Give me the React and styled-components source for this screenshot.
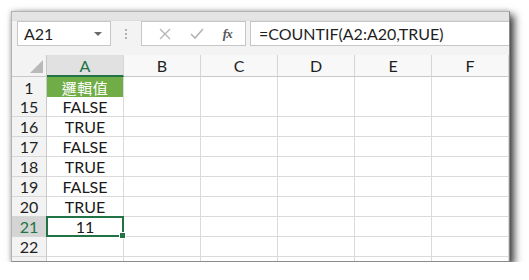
import React from "react";
import styled, { createGlobalStyle } from "styled-components";

const Global = createGlobalStyle`
  html, body { margin: 0; padding: 0; background: #ffffff; }
  body { font-family: Lato, "Liberation Sans", "Noto Sans CJK TC", sans-serif; }
`;

const Page = styled.div`
  padding: 11px 0 0 11px;
`;

const Window = styled.div`
  width: 497px;
  height: 249px;
  border: 1px solid #b4b4b4;
  border-right-color: #8a8a8a;
  border-bottom-color: #8a8a8a;
  background: #f3f3f3;
  box-shadow: 4px 4px 8px rgba(0, 0, 0, 0.8), -1px -1px 4px rgba(0, 0, 0, 0.12);
  overflow: hidden;
  display: flex;
  flex-direction: column;
`;

const TopBand = styled.div`
  height: 8px;
  background: #e4e4e4;
  border-bottom: 1px solid #dcdcdc;
`;

const FormulaRow = styled.div`
  height: 25px;
  display: flex;
  align-items: stretch;
  padding-left: 5px;
`;

const NameBox = styled.div`
  width: 94px;
  border: 1px solid #c6c6c6;
  background: #fff;
  display: flex;
  align-items: center;
  justify-content: space-between;
  padding: 0 8px 0 6px;
  box-sizing: border-box;
  font-size: 16px;
  color: #1f1f1f;
`;

const Caret = styled.span`
  width: 0;
  height: 0;
  border-left: 4px solid transparent;
  border-right: 4px solid transparent;
  border-top: 4px solid #6a6a6a;
`;

const Grip = styled.div`
  width: 30px;
  display: flex;
  flex-direction: column;
  align-items: center;
  justify-content: center;
  gap: 2px;
  span {
    width: 2px;
    height: 2px;
    background: #b0b0b0;
  }
`;

const FxBox = styled.div`
  width: 105px;
  border: 1px solid #c6c6c6;
  background: #fff;
  box-sizing: border-box;
  display: flex;
  align-items: center;
  justify-content: space-around;
  padding: 0 4px 0 8px;
`;

const Fx = styled.span`
  font-family: "Liberation Serif", "DejaVu Serif", serif;
  font-style: italic;
  font-weight: bold;
  font-size: 13px;
  color: #555;
  letter-spacing: -1px;
`;

const FormulaInput = styled.div`
  flex: 1;
  margin-left: 4px;
  border: 1px solid #c6c6c6;
  border-right: none;
  background: #fff;
  display: flex;
  align-items: center;
  padding-left: 8px;
  font-size: 16px;
  color: #1f1f1f;
`;

const Gap = styled.div`
  height: 9px;
`;

const Grid = styled.div`
  flex: 1;
  background: #fff;
  overflow: hidden;
`;

const Row = styled.div`
  display: grid;
  grid-template-columns: 35px repeat(6, 77px);
  height: ${(p) => (p.$header ? 22 : 20)}px;
`;

const Corner = styled.div`
  background: #f3f3f3;
  border-right: 1px solid #c9c9c9;
  border-bottom: 1px solid #c9c9c9;
  position: relative;
  &::after {
    content: "";
    position: absolute;
    right: 3px;
    bottom: 3px;
    width: 0;
    height: 0;
    border-left: 13px solid transparent;
    border-bottom: 13px solid #b9b9b9;
  }
`;

const ColHead = styled.div`
  background: ${(p) => (p.$sel ? "#e1e1e1" : "#f8f8f8")};
  border-right: 1px solid #d6d6d6;
  border-bottom: ${(p) => (p.$sel ? "2px solid #217346" : "1px solid #c9c9c9")};
  color: ${(p) => (p.$sel ? "#217346" : "#1f1f1f")};
  font-size: 16px;
  display: flex;
  align-items: center;
  justify-content: center;
  box-sizing: border-box;
`;

const RowHead = styled.div`
  background: ${(p) => (p.$sel ? "#d4d4d4" : "#f3f3f3")};
  border-right: 1px solid #c9c9c9;
  border-bottom: 1px solid #d6d6d6;
  color: ${(p) => (p.$sel ? "#217346" : "#1f1f1f")};
  font-size: 16px;
  display: flex;
  align-items: center;
  justify-content: center;
  box-sizing: border-box;
`;

const Cell = styled.div`
  background: ${(p) => (p.$fill ? "#70ad47" : "#fff")};
  color: ${(p) => (p.$fill ? "#fff" : "#1a1a1a")};
  border-right: 1px solid #dadada;
  border-bottom: 1px solid #dadada;
  font-size: ${(p) => (p.$fill ? "15px" : "16px")};
  font-family: ${(p) =>
    p.$fill ? '"Noto Sans CJK TC", sans-serif' : 'Lato, "Liberation Sans", sans-serif'};
  letter-spacing: ${(p) => (p.$fill ? "0.5px" : "0")};
  display: flex;
  align-items: center;
  justify-content: center;
  box-sizing: border-box;
  position: relative;
  ${(p) =>
    p.$active &&
    `
    &::before {
      content: "";
      position: absolute;
      left: -1px;
      top: -1px;
      right: -1px;
      bottom: -1px;
      border: 2px solid #217346;
    }
    &::after {
      content: "";
      position: absolute;
      right: -3px;
      bottom: -3px;
      width: 5px;
      height: 5px;
      background: #217346;
      border: 1px solid #fff;
      z-index: 2;
    }
  `}
`;

const cols = ["A", "B", "C", "D", "E", "F"];
const rows = [
  { n: "1", v: "邏輯值", fill: true },
  { n: "15", v: "FALSE" },
  { n: "16", v: "TRUE" },
  { n: "17", v: "FALSE" },
  { n: "18", v: "TRUE" },
  { n: "19", v: "FALSE" },
  { n: "20", v: "TRUE" },
  { n: "21", v: "11", active: true },
  { n: "22", v: "" },
  { n: "", v: "", key: "23" },
];

function XIcon() {
  return (
    <svg width="12" height="12" viewBox="0 0 12 12">
      <path d="M1 1 L11 11 M11 1 L1 11" stroke="#b4b4b4" strokeWidth="1.3" fill="none" />
    </svg>
  );
}

function CheckIcon() {
  return (
    <svg width="14" height="12" viewBox="0 0 14 12">
      <path d="M1 6 L5 10 L13 1" stroke="#b4b4b4" strokeWidth="1.6" fill="none" />
    </svg>
  );
}

export default function App() {
  return (
    <Page>
      <Global />
      <Window>
        <TopBand />
        <FormulaRow>
          <NameBox>
            <span>A21</span>
            <Caret />
          </NameBox>
          <Grip>
            <span />
            <span />
            <span />
          </Grip>
          <FxBox>
            <XIcon />
            <CheckIcon />
            <Fx>fx</Fx>
          </FxBox>
          <FormulaInput>=COUNTIF(A2:A20,TRUE)</FormulaInput>
        </FormulaRow>
        <Gap />
        <Grid>
          <Row $header>
            <Corner />
            {cols.map((c) => (
              <ColHead key={c} $sel={c === "A"}>
                {c}
              </ColHead>
            ))}
          </Row>
          {rows.map((r) => (
            <Row key={r.key || r.n}>
              <RowHead $sel={r.active}>{r.n}</RowHead>
              {cols.map((c) => (
                <Cell
                  key={c}
                  $fill={c === "A" && r.fill}
                  $active={c === "A" && r.active}
                >
                  {c === "A" ? r.v : ""}
                </Cell>
              ))}
            </Row>
          ))}
        </Grid>
      </Window>
    </Page>
  );
}
